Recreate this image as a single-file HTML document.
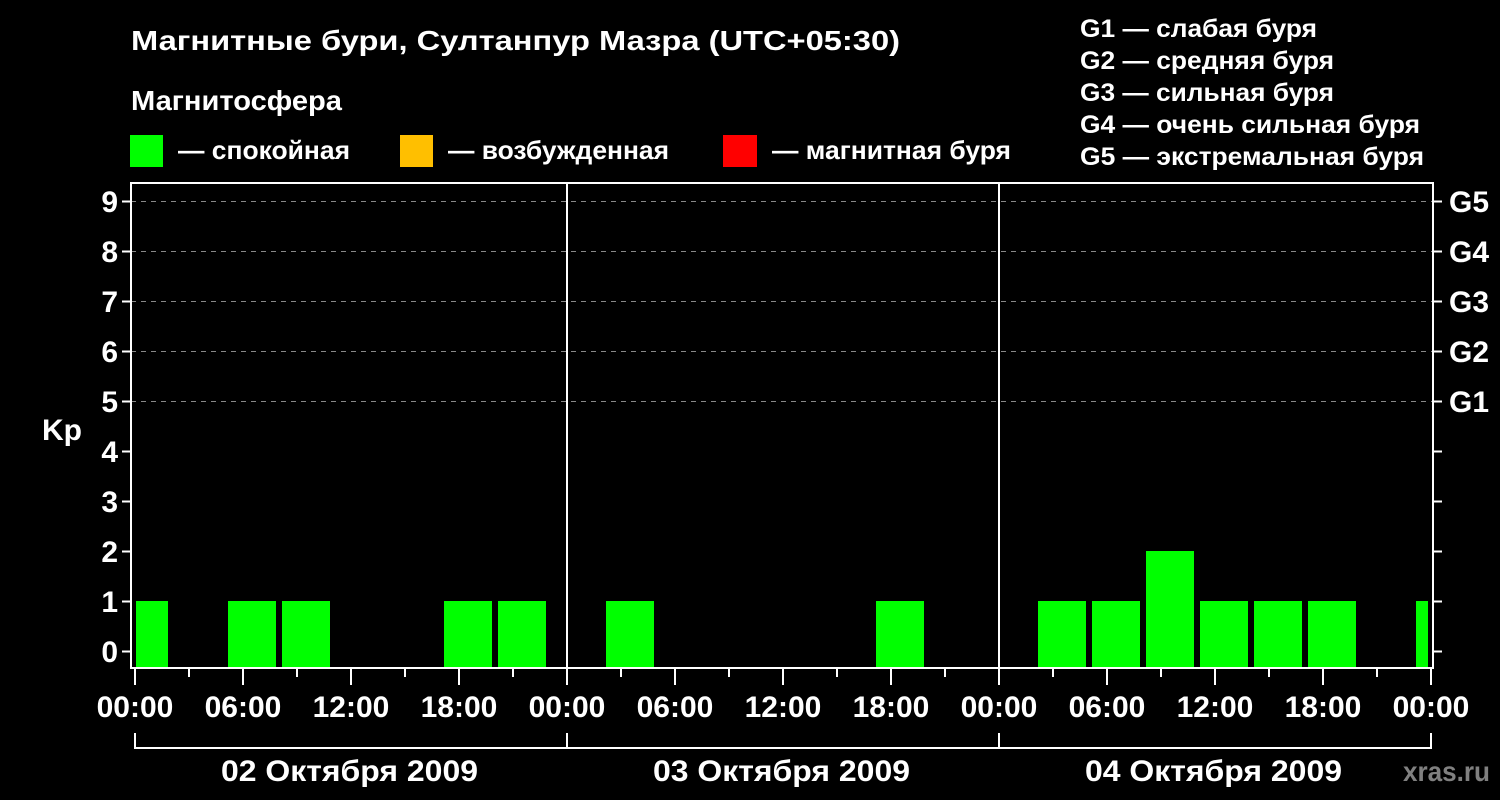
<!DOCTYPE html>
<html><head><meta charset="utf-8"><style>html,body{margin:0;padding:0;background:#000}svg{display:block}text{font-family:"Liberation Sans",Arial,sans-serif;font-weight:bold;fill:#fff}</style></head><body>
<svg width="1500" height="800" xmlns="http://www.w3.org/2000/svg">
<rect width="1500" height="800" fill="#000"/>
<text x="131" y="50" font-size="28" textLength="769" lengthAdjust="spacingAndGlyphs">Магнитные бури, Султанпур Мазра (UTC+05:30)</text>
<text x="131" y="110" font-size="28" textLength="211" lengthAdjust="spacingAndGlyphs">Магнитосфера</text>
<rect x="130" y="135" width="33" height="32" fill="#00ff00"/>
<rect x="400" y="135" width="33" height="32" fill="#ffbf00"/>
<rect x="723" y="135" width="34" height="32" fill="#ff0000"/>
<text x="178" y="159" font-size="26" textLength="172" lengthAdjust="spacingAndGlyphs">— спокойная</text>
<text x="448" y="159" font-size="26" textLength="221" lengthAdjust="spacingAndGlyphs">— возбужденная</text>
<text x="772" y="159" font-size="26" textLength="239" lengthAdjust="spacingAndGlyphs">— магнитная буря</text>
<g font-size="25">
<text x="1080" y="37" textLength="237" lengthAdjust="spacingAndGlyphs">G1 — слабая буря</text>
<text x="1080" y="69" textLength="254" lengthAdjust="spacingAndGlyphs">G2 — средняя буря</text>
<text x="1080" y="101" textLength="254" lengthAdjust="spacingAndGlyphs">G3 — сильная буря</text>
<text x="1080" y="133" textLength="340" lengthAdjust="spacingAndGlyphs">G4 — очень сильная буря</text>
<text x="1080" y="165" textLength="344" lengthAdjust="spacingAndGlyphs">G5 — экстремальная буря</text>
</g>
<g stroke="#888" stroke-width="1" stroke-dasharray="5,5">
<line x1="131" y1="201.5" x2="1433" y2="201.5"/><line x1="131" y1="251.5" x2="1433" y2="251.5"/><line x1="131" y1="301.5" x2="1433" y2="301.5"/><line x1="131" y1="351.5" x2="1433" y2="351.5"/><line x1="131" y1="401.5" x2="1433" y2="401.5"/>
</g>
<g fill="#00ff00">
<rect x="136" y="601" width="32" height="66"/>
<rect x="228" y="601" width="48" height="66"/>
<rect x="282" y="601" width="48" height="66"/>
<rect x="444" y="601" width="48" height="66"/>
<rect x="498" y="601" width="48" height="66"/>
<rect x="606" y="601" width="48" height="66"/>
<rect x="876" y="601" width="48" height="66"/>
<rect x="1038" y="601" width="48" height="66"/>
<rect x="1092" y="601" width="48" height="66"/>
<rect x="1146" y="551" width="48" height="116"/>
<rect x="1200" y="601" width="48" height="66"/>
<rect x="1254" y="601" width="48" height="66"/>
<rect x="1308" y="601" width="48" height="66"/>
<rect x="1416" y="601" width="12" height="66"/>
</g>
<g stroke="#fff" stroke-width="2" fill="none">
<rect x="131" y="183" width="1302" height="485"/>
<line x1="567" y1="183" x2="567" y2="668"/><line x1="999" y1="183" x2="999" y2="668"/>
<path d="M122 201.5h9M122 251.5h9M122 301.5h9M122 351.5h9M122 401.5h9M122 451.5h9M122 501.5h9M122 551.5h9M122 601.5h9M122 651.5h9"/>
<path d="M1433 201.5h9M1433 251.5h9M1433 301.5h9M1433 351.5h9M1433 401.5h9M1433 451.5h9M1433 501.5h9M1433 551.5h9M1433 601.5h9M1433 651.5h9"/>
<path d="M135 668v17M243 668v17M351 668v17M459 668v17M567 668v17M675 668v17M783 668v17M891 668v17M999 668v17M1107 668v17M1215 668v17M1323 668v17M1431 668v17"/>
<path d="M189 668v9M297 668v9M405 668v9M513 668v9M621 668v9M729 668v9M837 668v9M945 668v9M1053 668v9M1161 668v9M1269 668v9M1377 668v9"/>
<path d="M135 733v15H1431V733M567 733v15M999 733v15"/>
</g>
<g font-size="30" text-anchor="end">
<text x="118" y="212">9</text><text x="118" y="262">8</text><text x="118" y="312">7</text><text x="118" y="362">6</text><text x="118" y="412">5</text><text x="118" y="462">4</text><text x="118" y="512">3</text><text x="118" y="562">2</text><text x="118" y="612">1</text><text x="118" y="662">0</text>
</g>
<text x="42" y="440" font-size="30">Kp</text>
<g font-size="30">
<text x="1449" y="212">G5</text><text x="1449" y="262">G4</text><text x="1449" y="312">G3</text><text x="1449" y="362">G2</text><text x="1449" y="412">G1</text>
</g>
<g font-size="30" text-anchor="middle">
<text x="135" y="717">00:00</text><text x="243" y="717">06:00</text><text x="351" y="717">12:00</text><text x="459" y="717">18:00</text><text x="567" y="717">00:00</text><text x="675" y="717">06:00</text><text x="783" y="717">12:00</text><text x="891" y="717">18:00</text><text x="999" y="717">00:00</text><text x="1107" y="717">06:00</text><text x="1215" y="717">12:00</text><text x="1323" y="717">18:00</text><text x="1431" y="717">00:00</text>
</g>
<g font-size="30">
<text x="221" y="781" textLength="257" lengthAdjust="spacingAndGlyphs">02 Октября 2009</text><text x="653" y="781" textLength="257" lengthAdjust="spacingAndGlyphs">03 Октября 2009</text><text x="1085" y="781" textLength="257" lengthAdjust="spacingAndGlyphs">04 Октября 2009</text>
</g>
<text x="1403" y="781" font-size="28" style="fill:#808080" textLength="87" lengthAdjust="spacingAndGlyphs">xras.ru</text>
</svg>
</body></html>
